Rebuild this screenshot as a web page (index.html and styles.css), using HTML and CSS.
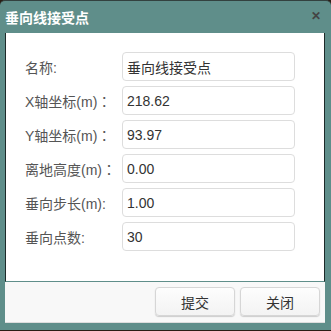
FILE: index.html
```html
<!DOCTYPE html>
<html>
<head>
<meta charset="utf-8">
<title>垂向线接受点</title>
<link rel="stylesheet" href="styles.css">
</head>
<body>
<div class="window">
  <div class="titlebar">
    <span class="title">垂向线接受点</span>
    <span class="close">✕</span>
  </div>
  <div class="content">
    <div class="row"><label>名称:</label><input type="text" value="垂向线接受点"></div>
    <div class="row"><label>X轴坐标(m)<span class="colon">：</span></label><input type="text" value="218.62"></div>
    <div class="row"><label>Y轴坐标(m)<span class="colon">：</span></label><input type="text" value="93.97"></div>
    <div class="row"><label>离地高度(m)<span class="colon">：</span></label><input type="text" value="0.00"></div>
    <div class="row"><label>垂向步长(m):</label><input type="text" value="1.00"></div>
    <div class="row"><label>垂向点数:</label><input type="text" value="30"></div>
  </div>
  <div class="footer">
    <button>提交</button>
    <button>关闭</button>
  </div>
</div>
</body>
</html>
```

FILE: styles.css
```css
html {background: #2a1d14;}
body {margin: 0; font-family: "Liberation Sans", "Noto Sans CJK SC", sans-serif; font-size: 14px;}
.window {width: 331px; height: 330px; box-sizing: border-box; background: #5f8e8a; border-top: 1px solid #33413f; border-radius: 5px 5px 0 0; padding: 0 6px 7px 5px; display: flex; flex-direction: column;}
.titlebar {height: 32px; display: flex; align-items: center; justify-content: space-between;}
.title {color: #fff; font-weight: bold; font-size: 14px; margin-top: -1px;}
.close {color: #444; font-weight: bold; font-size: 12px; margin-right: 4px; margin-top: -2px;}
.content {flex: 1; background: #fff; border-left: 1px solid #1d2a29; border-right: 1px solid #1d2a29; border-bottom: 1px solid #5f8e8a; padding: 19px 0 0 19px; display: flex; flex-direction: column; gap: 5px;}
.row {display: flex; align-items: center; height: 29px;}
.row label {width: 97px; color: #555;}
.colon {font-family: "Noto Sans CJK TC", sans-serif;}
.row input {width: 173px; height: 29px; box-sizing: border-box; border: 1px solid #ddd; border-radius: 4px; padding: 0 4px; font-family: inherit; font-size: 14px; color: #333; outline: none;}
.footer {background: #f8f8f8; border-bottom: 1px solid #ddd; display: flex; justify-content: flex-end; align-items: flex-start; gap: 5px; padding: 5px 5px 0 0; box-sizing: border-box; height: 41px;}
button {width: 80px; height: 29px; border: 1px solid #d6d6d6; border-radius: 4px; background: linear-gradient(#fdfdfd, #f3f3f3); box-shadow: 0 1px 1px #ccc; font-family: inherit; font-size: 14px; color: #333; padding: 0;}
```
